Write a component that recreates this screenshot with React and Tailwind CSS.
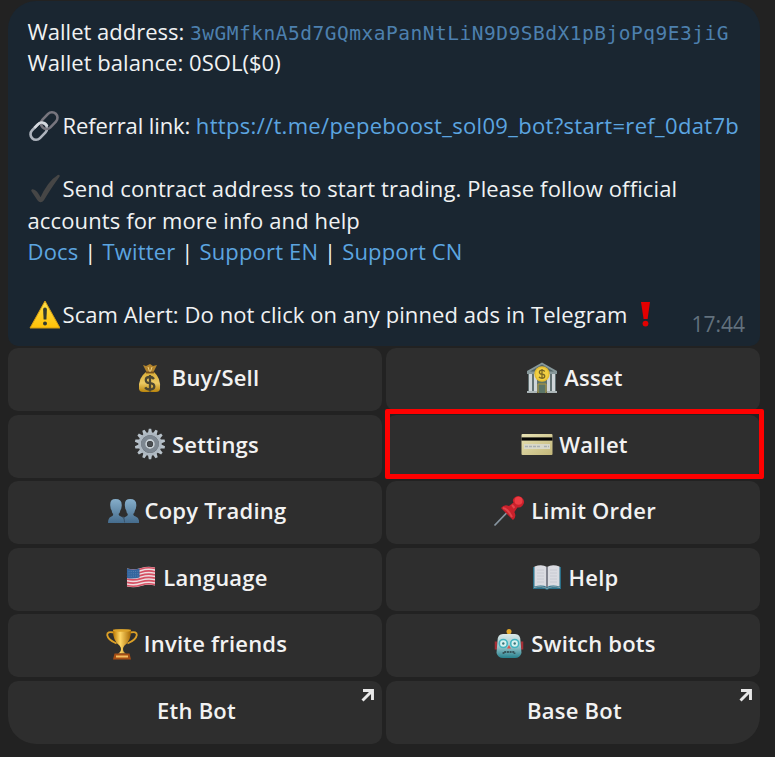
const LINK = 'text-[#5ca5e0]';

function Svg({ w = 32, h = 32, children, className = '' }) {
  return (
    <svg width={w} height={h} viewBox={`0 0 ${w} ${h}`} className={`shrink-0 ${className}`} fill="none">
      {children}
    </svg>
  );
}

const LinkIcon = () => (
  <Svg className="mr-[3px]">
    <g transform="rotate(-46 16 16)" strokeWidth="2.6">
      <rect x="-1" y="10.5" width="19" height="11" rx="5.5" stroke="#aeb4bd" />
      <rect x="14" y="10.5" width="19" height="11" rx="5.5" stroke="#77757e" />
      <path d="M8 10.5h5a5.5 5.5 0 0 1 5 8" stroke="#d5d9df" />
    </g>
  </Svg>
);

const CheckIcon = () => (
  <Svg className="mr-[3px]">
    <path d="M4.500 17.500Q8 17 12.500 27C17 17 22 8 30.500 3Q21 16 15 26.500Q12.500 29.500 10.500 26.500Z" fill="#464646" stroke="#464646" strokeWidth="2.500" strokeLinejoin="round" />
  </Svg>
);

const WarnIcon = () => (
  <Svg className="mr-[3px]">
    <defs>
      <linearGradient id="warn" x2="0" y2="1"><stop stopColor="#ffe04a" /><stop offset="1" stopColor="#ffc107" /></linearGradient>
    </defs>
    <path d="M17 2L32 29H2Z" fill="url(#warn)" stroke="#d39b12" strokeWidth="1" strokeLinejoin="round" />
    <path d="M15.1 10.5q0-2 1.9-2t1.9 2l-.5 10h-2.8z" fill="#333b30" />
    <circle cx="17" cy="24.500" r="2" fill="#333b30" />
  </Svg>
);

const BangIcon = () => (
  <Svg className="ml-[1px]">
    <path d="M12 3H21L18.6 20H14.6Z" fill="#e30000" />
    <circle cx="16.5" cy="24.6" r="2.9" fill="#e30000" />
  </Svg>
);

const BagIcon = () => (
  <Svg>
    <defs><linearGradient id="bag" x2="0" y2="1"><stop stopColor="#d8ac35" /><stop offset=".55" stopColor="#ecca64" /><stop offset="1" stopColor="#ba850c" /></linearGradient></defs>
    <path d="M9 3l3 1 4-2 3 2 4-1-4 8h-6z" fill="#b3842c" />
    <path d="M14 5l2 6 2-6" stroke="#efd080" />
    <path d="M12 10h8q7 6 6 17-.5 3-4 3H9q-3.500 0-4-3-1-11 7-17z" fill="url(#bag)" />
    <path d="M12 10.500h8" stroke="#77521c" strokeWidth="1.8" />
    <path d="M20 17q-1.400-2-4.200-2-4 0-4 3t4.200 3.200q4.300.4 4.300 3.200T16 27.500q-3.500 0-4.800-2.200M16 13v16.500" stroke="#4b4632" strokeWidth="2.300" />
  </Svg>
);

const GearIcon = () => (
  <Svg>
    {Array.from({ length: 14 }, (_, i) => (
      <path key={i} d="M14 5L14.800.8h2.400L18 5z" fill="#b8c2ca" transform={`rotate(${i * 25.714} 16 16)`} />
    ))}
    <circle cx="16" cy="16" r="10.200" stroke="#aeb8c1" strokeWidth="3" />
    <circle cx="16" cy="16" r="6.900" stroke="#7d8791" strokeWidth="4.200" />
    <circle cx="16" cy="16" r="4" stroke="#c5ced5" strokeWidth="1.800" />
    <circle cx="16" cy="16" r="2.800" fill="#4a4e52" />
  </Svg>
);

const PeopleIcon = () => (
  <Svg>
    <defs><linearGradient id="ppl" x2="0" y2="1"><stop stopColor="#86aeca" /><stop offset="1" stopColor="#456c8d" /></linearGradient></defs>
    {[0, 14.600].map((x) => (
      <path key={x} transform={`translate(${x} 0)`} d="M8.500 4q6.800 0 6.200 7-.3 3-1.200 4-.5 3-2 4 .3 2 3 2.800 3 1 3.200 6.200H1q0-5 3-6.200 2.300-.8 2.300-2.800-1.400-1-1.800-4-1-1-1.200-4Q2.500 4 8.500 4z" fill="url(#ppl)" />
    ))}
    <path d="M16 21.500q1.400 1.500 1.600 6" stroke="#3a536a" />
  </Svg>
);

const FlagIcon = () => (
  <Svg>
    <g transform="translate(2 6.500) skewY(-2)">
      <path d="M0 1q7 2 14 0t14 0v18q-7-2-14 0T0 19z" fill="#eedde0" />
      <path d="M0 2q7 2 14 0t14 0M0 5.200q7 2 14 0t14 0M0 8.400q7 2 14 0t14 0M0 11.600q7 2 14 0t14 0M0 14.800q7 2 14 0t14 0M0 18q7 2 14 0t14 0" stroke="#d54f62" strokeWidth="1.700" />
      <path d="M0 1q6 2 12.500.4V10.500Q6 12 0 10.500z" fill="#33659e" />
      <path d="M1.500 4.200h10M1.500 6.500h10M1.500 8.800h10" stroke="#7e9dc2" strokeDasharray="1 1.200" opacity=".5" />
    </g>
  </Svg>
);

const CupIcon = () => (
  <Svg>
    <defs><linearGradient id="cup"><stop stopColor="#b87500" /><stop offset=".4" stopColor="#ffd766" /><stop offset="1" stopColor="#a56600" /></linearGradient></defs>
    <path d="M8 4.500Q1 3 1.200 7 2 12 10.500 15.500M24 4.500q7-1.500 6.800 2.500-.8 5-9.300 8.500" stroke="#dca027" strokeWidth="1.800" />
    <path d="M7 1.500h18q.3 11.500-6.500 16-1.500 1.500-1.500 3.500 0 3 3 4.500h-8q3-1.500 3-4.500 0-2-1.500-3.500Q6.700 13 7 1.500z" fill="url(#cup)" />
    <ellipse cx="16" cy="2.500" rx="9" ry="1.300" fill="#dca329" />
    <path d="M8.500 25.500h15l1.500 6H7z" fill="#a54e15" />
    <path d="M10 28.500h12" stroke="#f6bd5e" strokeWidth="2" />
  </Svg>
);

const BankIcon = () => (
  <Svg>
    <path d="M16 .5L31 9v3H1V9z" fill="#87989a" />
    <path d="M16 2.500L28 9.500H4z" fill="#556668" />
    <path d="M2 12h28v18H2z" fill="#617072" />
    <path d="M4.500 12v17M9.500 12v17M22.500 12v17M27.500 12v17" stroke="#cfd5d8" strokeWidth="3" />
    <path d="M1 30h10M21 30h10" stroke="#abb5b7" strokeWidth="2" />
    <path d="M12 19h8v12h-8z" fill="#5c7567" /><path d="M12 31V22h8v9" stroke="#b69a3e" />
    <circle cx="16" cy="12" r="7.700" fill="#e6bd2f" /><circle cx="16" cy="12" r="6.300" fill="#f1cf43" />
    <path d="M18.700 9.500q-1-1.300-2.700-1.300-2.600 0-2.600 2 0 1.800 2.700 2 2.600.2 2.600 2 0 2-2.700 2-2 0-3-1.400M16 7v10" stroke="#786625" strokeWidth="1.300" />
  </Svg>
);

const CardIcon = () => (
  <Svg>
    <defs><linearGradient id="card" x2="1" y2="1"><stop stopColor="#e7e2b4" /><stop offset="1" stopColor="#c3b779" /></linearGradient></defs>
    <rect x=".5" y="6" width="31" height="21" rx="1" fill="url(#card)" />
    <path d="M.5 11h31" stroke="#060606" strokeWidth="3.200" />
    <path d="M3 16h26v5H3z" fill="#d8d8ca" />
    <path d="M4 18.500h16M23 18.500h5" stroke="#a9afb2" strokeWidth="1.500" strokeDasharray="3 1" />
  </Svg>
);

const PinIcon = () => (
  <Svg>
    <path d="M1.500 30.500L14 17.500" stroke="#8795a0" strokeWidth="1.800" />
    <path d="M21 3q4-4 8-.3t.4 8q-2 2.300-5 1.800l-3 4.500q2.500 5-1.400 8L8 13q3-4 8-2l4.500-3.500Q19 5 21 3z" fill="#c9202b" />
    <circle cx="25.500" cy="5.800" r="4" fill="#ec3c43" />
    <path d="M10 13q4 0 9 9M19 10l2.500 3" stroke="#e0444a" strokeWidth="2" />
  </Svg>
);

const BookIcon = () => (
  <Svg>
    <path d="M2 6h28v22H18l-2 1-2-1H2z" fill="#2b7089" />
    <path d="M3.500 5.500Q11 3 16 6q5-3 12.500-.5v20Q21 23.500 16 26q-5-2.500-12.500-.5z" fill="#dadbe1" />
    <path d="M16 6v20" stroke="#777985" strokeWidth="1.800" />
    <path d="M6 9h7M6 12h7M6 15h7M6 18h7M6 21h7M19 9h7M19 12h7M19 15h7M19 18h7M19 21h7" stroke="#c6c8d1" strokeWidth=".9" />
    <path d="M3 26.500q8-2 13 1 5-3 13-1" stroke="#8fa8b1" />
  </Svg>
);

const RobotIcon = () => (
  <Svg>
    <defs><linearGradient id="bot" x2="0" y2="1"><stop stopColor="#dbe9e9" /><stop offset=".5" stopColor="#9ec8cd" /><stop offset="1" stopColor="#26818e" /></linearGradient></defs>
    <path d="M3 13.500v8M29 13.500v8" stroke="#a52f36" strokeWidth="2.500" />
    <path d="M16 3v4" stroke="#b89446" strokeWidth="3" /><circle cx="16" cy="3.500" r="2.500" fill="#e2a92c" />
    <path d="M10 6h12q5.500 0 5.500 7l1 12q-1.500 5-6.500 5H10q-5 0-6.500-5l1-12q0-7 5.500-7z" fill="url(#bot)" />
    <circle cx="10.300" cy="15.500" r="4" fill="#d7f1ef" stroke="#42b3bf" strokeWidth="1.600" />
    <circle cx="21.700" cy="15.500" r="4" fill="#d7f1ef" stroke="#42b3bf" strokeWidth="1.600" />
    <circle cx="10.300" cy="15.500" r="1.200" fill="#39747a" /><circle cx="21.700" cy="15.500" r="1.200" fill="#39747a" />
    <path d="M16 17l2 3.500h-4z" fill="#df5148" />
    <path d="M10.500 26v-2h11v2" stroke="#36565c" strokeWidth="1.800" strokeDasharray="2 .7" />
  </Svg>
);

const buttons = [
  ['Buy/Sell', BagIcon], ['Asset', BankIcon],
  ['Settings', GearIcon], ['Wallet', CardIcon],
  ['Copy Trading', PeopleIcon], ['Limit Order', PinIcon],
  ['Language', FlagIcon], ['Help', BookIcon],
  ['Invite friends', CupIcon], ['Switch bots', RobotIcon],
  ['Eth Bot', null], ['Base Bot', null],
];

export default function App() {
  return (
    <div className="h-[757px] w-[775px] overflow-hidden bg-[#222222] pl-2 pt-px font-['Open_Sans',sans-serif] text-[22px]">
      <section className="relative h-[345px] w-[752px] rounded-t-[28px] rounded-b-[10px] bg-[#1a2631] pl-[19.500px] pt-[15px] leading-[31.45px] whitespace-nowrap text-[#f0f2f3]">
        <div>Wallet address: <span className="font-['DejaVu_Sans_Mono',monospace] text-[19.500px] leading-none tracking-[0.510px] text-[#4d80ae]">3wGMfknA5d7GQmxaPanNtLiN9D9SBdX1pBjoPq9E3jiG</span></div>
        <div className="tracking-[0.040px]">Wallet balance: 0SOL($0)</div>
        <br />
        <div className="flex h-[31.45px] items-center"><LinkIcon /><span className="tracking-[-0.100px]">Referral link: <a className={`${LINK} tracking-[0.320px]`}>https://t.me/pepeboost_sol09_bot?start=ref_0dat7b</a></span></div>
        <br />
        <div className="flex h-[31.45px] items-center"><CheckIcon /><span className="tracking-[0.130px]">Send contract address to start trading. Please follow official</span></div>
        <div className="tracking-[0.120px]">accounts for more info and help</div>
        <div className="tracking-[0.170px]"><a className={LINK}>Docs</a> | <a className={LINK}>Twitter</a> | <a className={LINK}>Support EN</a> | <a className={LINK}>Support CN</a></div>
        <br />
        <div className="flex h-[31.45px] items-center"><WarnIcon /><span className="tracking-[0.080px]">Scam Alert: Do not click on any pinned ads in Telegram</span><BangIcon /></div>
        <time className="absolute right-[15px] bottom-[6px] text-[21px] text-[#62717d]">17:44</time>
      </section>
      <div className="mt-[2px] grid w-[752px] grid-cols-2 gap-x-1 gap-y-[3.500px]">
        {buttons.map(([label, Icon], i) => (
          <div
            key={label}
            className={`relative flex h-[63px] items-center justify-center gap-1.5 bg-[#2e2e2e] pb-[3.500px] pl-[3px] font-semibold tracking-[0.220px] text-[#f2f2f2] ${i === 10 ? 'rounded-[10px] rounded-bl-[28px]' : i === 11 ? 'rounded-[10px] rounded-br-[28px]' : 'rounded-[10px]'}`}
          >
            {Icon && <Icon />}
            <span>{label}</span>
            {label === 'Wallet' && <div className="absolute -top-[5.500px] -right-1 -bottom-[1.500px] -left-[1.500px] rounded-[2px] border-[5px] border-[#ff0000]" />}
            {!Icon && (
              <svg width="14" height="14" viewBox="0 0 14 14" fill="none" className="absolute top-[7px] right-[7px]">
                <path d="M2 2.500h9.500V12M11.500 2.500L1.500 12.500" stroke="#e8e8e8" strokeWidth="2.900" />
              </svg>
            )}
          </div>
        ))}
      </div>
    </div>
  );
}
